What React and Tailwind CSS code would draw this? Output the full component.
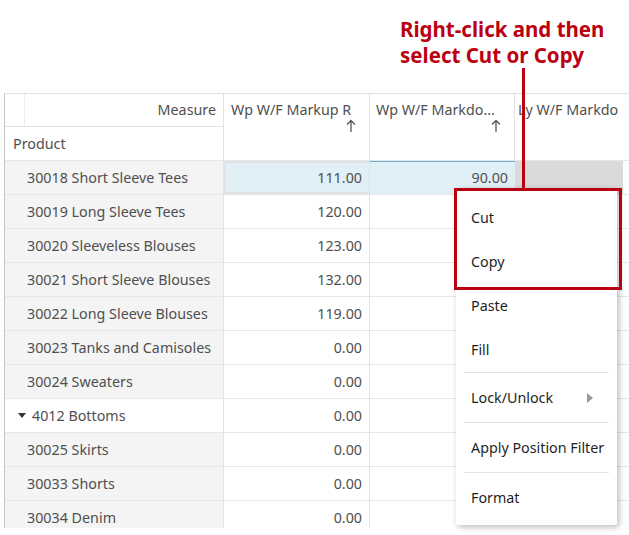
import React from 'react'

const rows = [
  { label: '30018 Short Sleeve Tees', v1: '111.00', v2: '90.00' },
  { label: '30019 Long Sleeve Tees', v1: '120.00' },
  { label: '30020 Sleeveless Blouses', v1: '123.00' },
  { label: '30021 Short Sleeve Blouses', v1: '132.00' },
  { label: '30022 Long Sleeve Blouses', v1: '119.00' },
  { label: '30023 Tanks and Camisoles', v1: '0.00' },
  { label: '30024 Sweaters', v1: '0.00' },
  { label: '4012 Bottoms', v1: '0.00', group: true },
  { label: '30025 Skirts', v1: '0.00' },
  { label: '30033 Shorts', v1: '0.00' },
  { label: '30034 Denim', v1: '0.00' },
]

function UpArrow() {
  return (
    <svg width="10" height="14" viewBox="0 0 10 14" className="text-[#555]">
      <path d="M5 13V1.5M1 5.5L5 1.5L9 5.5" fill="none" stroke="currentColor" strokeWidth="1.3" />
    </svg>
  )
}

function MenuItem({ label, h = 'h-[44px]', arrow = false }) {
  return (
    <div className={`${h} flex items-center justify-between pl-[15px] pr-[24px] text-[14.3px] text-[#1f1f1f] whitespace-nowrap`}>
      <span>{label}</span>
      {arrow && (
        <svg width="6" height="10" viewBox="0 0 6 10">
          <path d="M0 0L6 5L0 10Z" fill="#9a9a9a" />
        </svg>
      )}
    </div>
  )
}

export default function App() {
  return (
    <div
      className="relative w-[629px] h-[535px] overflow-hidden bg-white text-[#4f4f4f]"
      style={{ fontFamily: '"Noto Sans", "Open Sans", sans-serif' }}
    >
      {/* annotation */}
      <div className="h-[93px] pt-[16px] pl-[400px] text-[20.5px] leading-[26px] font-bold text-[#bb0010] whitespace-nowrap">
        <div>Right-click and then</div>
        <div>select Cut or Copy</div>
      </div>

      {/* grid */}
      <div className="ml-[4px] h-[435px] overflow-hidden border-l border-t border-l-[#c4c4c4] border-t-[#e2e2e2] text-[14.3px]">
        <div className="flex h-[66px]">
          <div className="w-[219px] flex flex-col border-r border-[#e2e2e2]">
            <div className="h-[33px] flex border-b border-[#e2e2e2]">
              <div className="w-[20px] border-r border-[#ececec]" />
              <div className="flex-1 flex items-center justify-end pr-[7px]">Measure</div>
            </div>
            <div className="flex-1 flex items-center pl-[8px]">Product</div>
          </div>
          <div className="w-[146px] border-r border-[#e2e2e2] pl-[7px] pr-[13px] pt-[5px] flex flex-col">
            <span className="whitespace-nowrap">Wp W/F Markup R</span>
            <span className="self-end -mt-[1px]"><UpArrow /></span>
          </div>
          <div className="w-[145px] border-r border-[#e2e2e2] pl-[6px] pr-[13px] pt-[5px] flex flex-col">
            <span className="whitespace-nowrap">Wp W/F Markdo...</span>
            <span className="self-end -mt-[1px]"><UpArrow /></span>
          </div>
          <div className="flex-1 pl-[3px] pt-[5px] whitespace-nowrap overflow-hidden">Ly W/F Markdo</div>
        </div>

        {rows.map((r, i) => (
          <div key={r.label} className="flex h-[34px] border-t border-[#e6e6e6]">
            <div
              className={`w-[219px] flex items-center border-r border-[#e2e2e2] ${
                r.group ? 'bg-white pl-[13px]' : 'bg-[#f4f4f4] pl-[22px]'
              } whitespace-nowrap`}
            >
              {r.group && (
                <svg width="8" height="5" viewBox="0 0 8 5" className="mr-[6px]">
                  <path d="M0 0H8L4 5Z" fill="#333" />
                </svg>
              )}
              {r.label}
            </div>
            <div
              className={`w-[146px] flex items-center justify-end border-r border-[#e2e2e2] pr-[7px] ${
                i === 0 ? 'bg-[#e1f0f7] border-2 border-[#2b7fa6] pr-[6px]' : ''
              }`}
            >
              {r.v1}
            </div>
            <div
              className={`w-[145px] flex items-center justify-end pr-[7px] ${
                i === 0 ? 'bg-[#e1f0f7] border-t border-[#6aaecb]' : ''
              }`}
            >
              {r.v2}
            </div>
            <div className="flex-1">
              {i === 0 && <div className="w-[108px] h-full bg-[#dadada]" />}
            </div>
          </div>
        ))}
      </div>

      {/* connector line */}
      <div className="absolute left-[522px] top-[68px] w-[3px] h-[121px] bg-[#bb0010]" />

      {/* context menu */}
      <div className="absolute left-[456px] top-[188px] w-[161px] h-[337px] bg-white rounded-[2px] shadow-[2px_2px_6px_rgba(0,0,0,0.28)] pt-[8px]">
        <MenuItem label="Cut" />
        <MenuItem label="Copy" />
        <MenuItem label="Paste" />
        <MenuItem label="Fill" />
        <div className="mx-[8px] h-px bg-[#e3e3e3]" />
        <MenuItem label="Lock/Unlock" h="h-[49px]" arrow />
        <div className="mx-[8px] h-px bg-[#e3e3e3]" />
        <MenuItem label="Apply Position Filter" h="h-[49px]" />
        <div className="mx-[8px] h-px bg-[#e3e3e3]" />
        <MenuItem label="Format" h="h-[49px]" />
      </div>

      {/* highlight box */}
      <div className="absolute left-[454px] top-[188px] w-[168px] h-[102px] border-[3px] border-[#bb0010]" />
    </div>
  )
}
